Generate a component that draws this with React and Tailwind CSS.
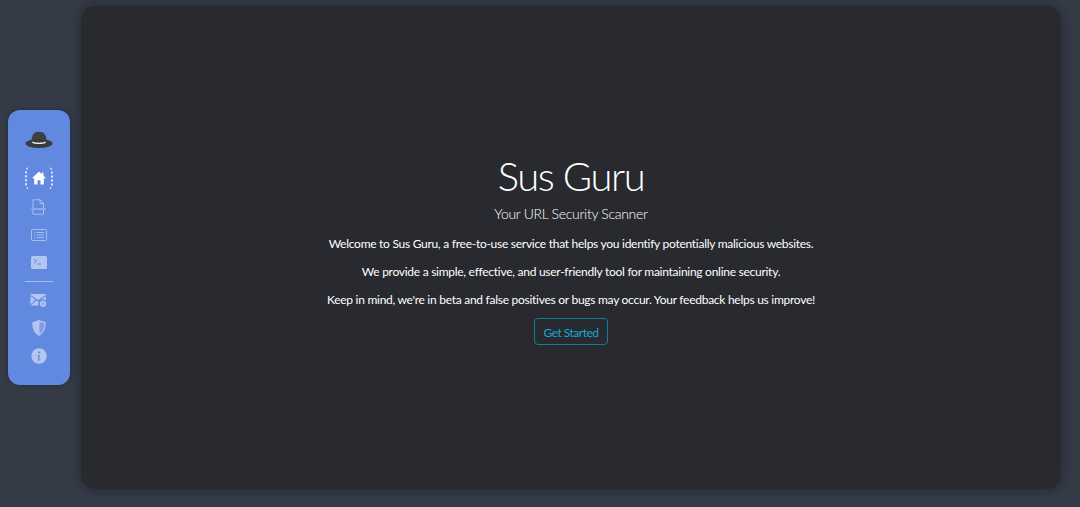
function Hat() {
  return (
    <svg width="28" height="18" viewBox="0 0 28 18">
      <path d="M6.500 10C6.500 4 9 .8 14 .8s7.500 3.200 7.500 9.200z" fill="#3f4044" />
      <ellipse cx="14" cy="12.500" rx="13.500" ry="4.500" fill="#3a3b3f" />
      <path d="M7.500 10.500c3 1.600 10 1.600 13 0l.2 1.400c-3.500 1.400-10 1.400-13.400 0z" fill="#f2f2f2" />
    </svg>
  );
}

function Home() {
  return (
    <svg width="14" height="14" viewBox="0 0 14 14" fill="#fff">
      <path d="M7 .5 .4 6.800l.9 1 .9-.8v6.500h3.300V9.200h3v4.300h3.300V7l.9.8.9-1-2.100-2V1.500h-1.700v1.700z" />
    </svg>
  );
}

function Doc() {
  return (
    <svg width="15" height="16" viewBox="0 0 15 16" fill="none" stroke="#a9bdee" strokeWidth="1">
      <path d="M2 9V.8h7l3.500 3.700V9M2 11v4.200h10.500V11" />
      <path d="M.3 10h14.400" strokeWidth="1.300" />
      <path d="M9 .8v3.700h3.500" />
    </svg>
  );
}

function ListCard() {
  return (
    <svg width="16" height="12" viewBox="0 0 16 12" fill="none" stroke="#a9bdee">
      <rect x=".5" y=".5" width="15" height="11" rx="1" />
      <path d="M3 3.500h1M3 6h1M3 8.500h1M5.500 3.500h7.500M5.500 6h7.500M5.500 8.500h7.500" />
    </svg>
  );
}

function Terminal() {
  return (
    <svg width="16" height="13" viewBox="0 0 16 13">
      <rect width="16" height="13" rx="1.500" fill="#b4c5f0" />
      <path d="M3 3l2.500 2L3 7" fill="none" stroke="#6289e0" />
      <path d="M6.500 8h3.500" stroke="#6289e0" />
    </svg>
  );
}

function Mail() {
  return (
    <svg width="17" height="13" viewBox="0 0 17 13">
      <path d="M.5 0h15.500v1L8.200 6 .5 1z" fill="#b4c5f0" />
      <path d="M.5 2.300 5.500 5.500.5 10.500zM16 2.300v4.200a4 4 0 0 0-5-.5l-.2-.2zM.5 11.500l6-5 1.700 1 2-1.200a4 4 0 0 0-1.500 5.200H.5z" fill="#b4c5f0" />
      <circle cx="13" cy="9.800" r="3.100" fill="#b4c5f0" />
      <path d="M13 8.300v3" stroke="#6289e0" />
    </svg>
  );
}

function Shield() {
  return (
    <svg width="14" height="16" viewBox="0 0 14 16">
      <path d="M7 0 13.700 2.200C14 8 12 13 7 16 2 13 0 8 .3 2.200z" fill="#b4c5f0" />
      <path d="M7.500 1.800 12.500 3.200C12.700 7.500 11 12 7.500 14.300z" fill="#7e9fe6" />
    </svg>
  );
}

function Info() {
  return (
    <svg width="16" height="16" viewBox="0 0 16 16">
      <circle cx="8" cy="8" r="7.700" fill="#b4c5f0" />
      <circle cx="8.300" cy="4.500" r="1.100" fill="#6289e0" />
      <path d="M6.800 7h2.200L8.200 11.500h1L9 12.500H6.800L7.600 8h-1z" fill="#6289e0" />
    </svg>
  );
}

export default function App() {
  return (
    <div className="flex h-[507px] w-[1080px] items-center overflow-hidden bg-[#343a46] pb-[12px] pl-[8px] pr-[19px] font-['Lato','Open_Sans',sans-serif]">
      <nav className="flex h-[275px] w-[62px] shrink-0 flex-col items-center rounded-[12px] bg-[#6289e0] pr-px pt-[21px] shadow-[0_0_4px_rgba(0,0,0,0.25)]">
        <Hat />
        <div className="mt-[17px] flex h-[24px] w-[28px] items-center justify-center rounded-[6px] border-x-2 border-dotted border-[#dfe7fa]">
          <Home />
        </div>
        <div className="mt-[4px] flex h-[25px] items-center justify-center"><Doc /></div>
        <div className="mt-[3px] flex h-[25px] items-center justify-center"><ListCard /></div>
        <div className="mt-[3px] flex h-[25px] items-center justify-center"><Terminal /></div>
        <div className="mt-[6px] h-px w-[28px] bg-[#a9bdee]" />
        <div className="mt-[6px] flex h-[25px] items-center justify-center"><Mail /></div>
        <div className="mt-[2px] flex h-[25px] items-center justify-center"><Shield /></div>
        <div className="mt-[3px] flex h-[25px] items-center justify-center"><Info /></div>
      </nav>
      <main className="ml-[11px] flex h-[483px] flex-1 flex-col items-center justify-center rounded-[14px] bg-[#282a2f] pt-[2px] text-white shadow-[0_0_12px_rgba(0,0,0,0.3)]">
        <h1 className="text-[40px] leading-[48px] font-light tracking-[-1.4px]">Sus Guru</h1>
        <h2 className="mt-[4px] text-[14px] leading-[20px] font-light tracking-[-0.3px]">Your URL Security Scanner</h2>
        <p className="mt-[11px] text-[12px] leading-[18px] tracking-[-0.27px]">Welcome to Sus Guru, a free-to-use service that helps you identify potentially malicious websites.</p>
        <p className="mt-[10px] text-[12px] leading-[18px] tracking-[-0.27px]">We provide a simple, effective, and user-friendly tool for maintaining online security.</p>
        <p className="mt-[10px] text-[12px] leading-[18px] tracking-[-0.27px]">Keep in mind, we're in beta and false positives or bugs may occur. Your feedback helps us improve!</p>
        <button className="mt-[9px] flex h-[27px] w-[74px] items-center justify-center rounded-[4px] border border-[#0e7f9c] pt-[2px] text-[12px] tracking-[-0.5px] text-[#17a9cf]">Get Started</button>
      </main>
    </div>
  );
}
